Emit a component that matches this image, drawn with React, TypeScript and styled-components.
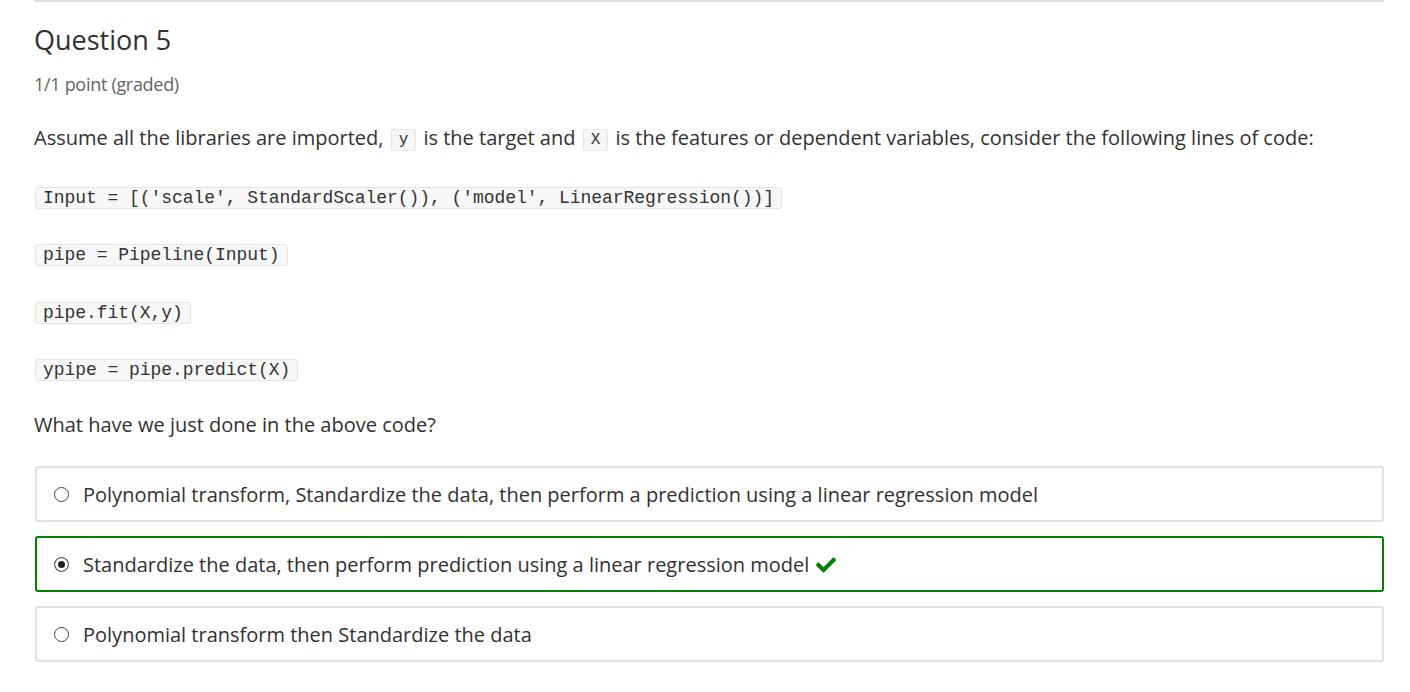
import styled, { createGlobalStyle } from 'styled-components';
import { FaCheck } from 'react-icons/fa';

const GlobalStyle = createGlobalStyle`
  body {
    margin: 0;
    background: #fff;
    font-family: "Open Sans", "Liberation Sans", sans-serif;
    color: #313131;
  }
`;

const Page = styled.div`
  width: 1350px;
  margin-left: 34px;
`;

const Rule = styled.div`
  height: 2px;
  background: #dedede;
`;

const Title = styled.h2`
  margin: 22px 0 0;
  font-size: 27px;
  line-height: 32px;
  font-weight: 400;
  color: #313131;
`;

const Points = styled.div`
  margin-top: 16px;
  font-size: 18px;
  line-height: 24px;
  color: #646464;
  letter-spacing: -0.3px;
`;

const Prompt = styled.p<{ $top: number }>`
  margin: ${(p) => p.$top}px 0 0;
  font-size: 20px;
  line-height: 28px;
`;

const InlineCode = styled.code`
  display: inline-block;
  font-family: "Liberation Mono", "Courier New", monospace;
  font-size: 16px;
  line-height: 20px;
  padding: 0 7px;
  margin: 0 2px;
  background: #f5f5f5;
  border: 1px solid #e6e6e6;
  border-radius: 3px;
  vertical-align: 1px;
`;

const CodeLine = styled.div<{ $top: number }>`
  margin-top: ${(p) => p.$top}px;
  line-height: 0;
`;

const Code = styled.code`
  display: inline-block;
  font-family: "Liberation Mono", "Courier New", monospace;
  font-size: 18px;
  line-height: 20px;
  padding: 0 7px;
  margin-left: 1px;
  color: #333;
  background: #f7f7f7;
  border: 1px solid #e4e4e4;
  border-radius: 3px;
  letter-spacing: -0.05px;
`;

const Options = styled.div`
  margin-top: 27px;
  display: flex;
  flex-direction: column;
  gap: 14px;
  padding-left: 1px;
`;

const Option = styled.label<{ $correct?: boolean }>`
  display: flex;
  align-items: center;
  gap: 14px;
  height: 56px;
  box-sizing: border-box;
  padding: 0 18px 0 17px;
  border: 2px solid ${(p) => (p.$correct ? '#008100' : '#e2e2e2')};
  border-radius: 3px;
  font-size: 20px;
  color: #313131;
`;

const Radio = styled.span<{ $checked?: boolean }>`
  width: 15px;
  height: 15px;
  box-sizing: border-box;
  border-radius: 50%;
  border: 1px solid ${(p) => (p.$checked ? '#666' : '#444')};
  background: ${(p) => (p.$checked ? '#1e1e1e' : '#fff')};
  box-shadow: ${(p) => (p.$checked ? 'inset 0 0 0 3px #fff' : 'none')};
  flex-shrink: 0;
`;

const Tick = styled.span`
  display: inline-flex;
  color: #008100;
  margin-left: 7px;
  vertical-align: -3px;
`;

const codeLines = [
  { top: 35, text: "Input = [('scale', StandardScaler()), ('model', LinearRegression())]" },
  { top: 35, text: 'pipe = Pipeline(Input)' },
  { top: 36, text: 'pipe.fit(X,y)' },
  { top: 35, text: 'ypipe = pipe.predict(X)' },
];

const choices = [
  { text: 'Polynomial transform, Standardize the data, then perform a prediction using a linear regression model' },
  { text: 'Standardize the data, then perform prediction using a linear regression model', correct: true },
  { text: 'Polynomial transform then Standardize the data' },
];

export default function App() {
  return (
    <>
      <GlobalStyle />
      <Page>
        <Rule />
        <Title>Question 5</Title>
        <Points>1/1 point (graded)</Points>
        <Prompt $top={28}>
          Assume all the libraries are imported, <InlineCode>y</InlineCode> is the target and{' '}
          <InlineCode>X</InlineCode> is the features or dependent variables, consider the following lines of code:
        </Prompt>
        {codeLines.map((line) => (
          <CodeLine key={line.text} $top={line.top}>
            <Code>{line.text}</Code>
          </CodeLine>
        ))}
        <Prompt $top={30}>What have we just done in the above code?</Prompt>
        <Options>
          {choices.map((c) => (
            <Option key={c.text} $correct={c.correct}>
              <Radio $checked={c.correct} />
              <span>
                {c.text}
                {c.correct && (
                  <Tick>
                    <FaCheck size={20} />
                  </Tick>
                )}
              </span>
            </Option>
          ))}
        </Options>
      </Page>
    </>
  );
}
